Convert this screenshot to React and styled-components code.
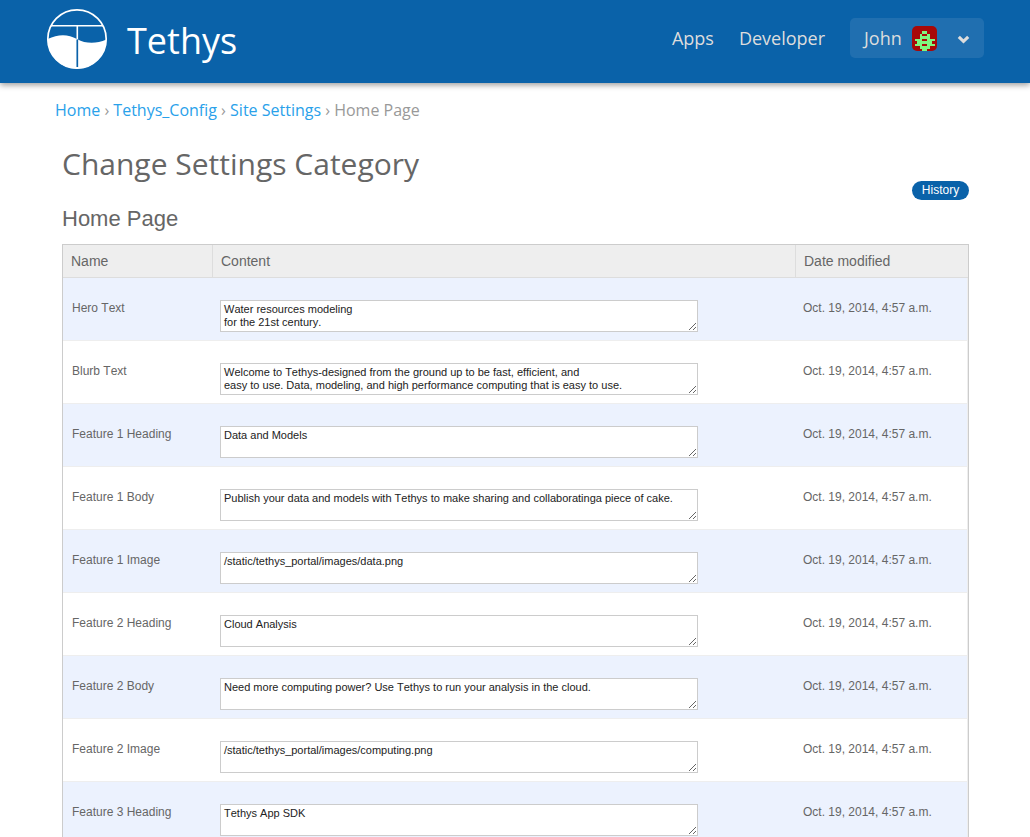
import React from "react";
import styled, { createGlobalStyle } from "styled-components";

const GlobalStyle = createGlobalStyle`
  * { box-sizing: border-box; }
  html, body { margin: 0; background: #fff; }
  body {
    height: 837px;
    overflow: hidden;
    color: #666;
    font-family: "Liberation Sans", Arial, sans-serif;
    font-size: 12px;
  }
`;

const display = `"Open Sans", "Noto Sans", sans-serif`;

const Header = styled.header`
  display: flex;
  align-items: flex-start;
  justify-content: space-between;
  height: 83px;
  padding: 0 46px;
  background: #0a62a9;
  box-shadow: 0 2px 6px rgba(0, 0, 0, 0.4);
`;

const Brand = styled.a`
  display: flex;
  align-items: flex-start;
  padding-top: 8px;
  color: #fff;
`;

const BrandName = styled.span`
  margin-left: 19px;
  padding-top: 6px;
  font: 36px/54px ${display};
`;

const Nav = styled.nav`
  display: flex;
  align-items: center;
  height: 40px;
  margin-top: 18px;
  color: #ddd;
  font: 18px/40px ${display};
`;

const NavLink = styled.a`
  margin-right: 25px;
`;

const UserMenu = styled.div`
  display: flex;
  align-items: center;
  width: 134px;
  height: 40px;
  padding-left: 14px;
  border-radius: 5px;
  background: #206fb0;
`;

const UserName = styled.span`
  width: 48px;
`;

const AvatarSvg = styled.svg`
  display: block;
  margin-top: 1px;
`;

const ChevronSvg = styled.svg`
  display: block;
  margin: 3px 0 0 20px;
`;

const Breadcrumbs = styled.div`
  height: 50px;
  padding: 15px 55px 0;
  color: #999;
  font: 16px/24px ${display};
  white-space: pre;
`;

const Crumb = styled.a`
  color: #29a1ea;
`;

const Separator = styled.span`
  font-size: 16px;
`;

const Main = styled.main`
  width: 907px;
  margin-left: 62px;
`;

const Title = styled.h1`
  height: 48px;
  margin: 7px 0 0;
  font: 30px/48px ${display};
`;

const Tools = styled.div`
  display: flex;
  justify-content: flex-end;
  height: 19px;
  margin-top: -7px;
`;

const HistoryButton = styled.a`
  width: 57px;
  height: 19px;
  border-radius: 10px;
  background: #0a62a9;
  color: #fff;
  font-size: 12px;
  line-height: 18px;
  text-align: center;
`;

const Subtitle = styled.h2`
  height: 26px;
  margin: 5px 0 13px;
  font-size: 22px;
  font-weight: 400;
  line-height: 27px;
`;

const Table = styled.div`
  border: 1px solid #ccc;
  font-kerning: none;
`;

const HeadRow = styled.div`
  display: grid;
  grid-template-columns: 150px 583px 1fr;
  height: 33px;
  border-bottom: 1px solid #ddd;
  background: #eee;
`;

const HeadCell = styled.div`
  padding-left: 8px;
  border-right: 1px solid #ddd;
  font-size: 14px;
  line-height: 32px;

  &:last-child { border-right: 0; }
`;

const Row = styled.div`
  display: grid;
  grid-template-columns: 157px 583px 1fr;
  height: 63px;
  border-right: 1px solid #eee;
  border-bottom: 1px solid #eee;
  background: ${(p) => (p.$shaded ? "#ecf2fe" : "#fff")};
`;

const Cell = styled.div`
  padding: 22px 0 0 ${(p) => p.$indent || 0}px;
  line-height: 16px;
`;

const Field = styled.textarea`
  display: block;
  width: 478px;
  height: 32px;
  margin: 0;
  padding: 2px 3px;
  border: 1px solid #ccc;
  border-radius: 0;
  background: #fff;
  color: #222;
  font: 11px/13px "Liberation Sans", Arial, sans-serif;
  font-kerning: none;
  overflow: hidden;
  resize: both;
`;

function Logo() {
  return (
    <svg width="62" height="62" viewBox="0 0 62 62">
      <path d="M1.6 31 C12 26 22 25.8 31 31 C40 36 50 36 60.4 31.6 A29.2 29.2 0 0 1 1.6 31Z" fill="#fff" />
      <circle cx="31" cy="31" r="29.2" fill="none" stroke="#fff" strokeWidth="1.7" />
      <path d="M5 17.7H57M31.3 17.7V31" stroke="#fff" strokeWidth="1.6" />
      <path d="M31.3 31.5V59" stroke="#0a62a9" strokeWidth="1.7" />
    </svg>
  );
}

const avatarPattern = [
  "..........",
  "..........",
  "....##....",
  "...#..#...",
  "...####...",
  ".###..###.",
  "..######..",
  ".###..###.",
  "...####...",
  "....##....",
];

function Avatar() {
  return (
    <AvatarSvg width="25" height="25" viewBox="0 0 10 10" shapeRendering="crispEdges">
      <rect width="10" height="10" rx="2" fill="#a80808" shapeRendering="auto" />
      {avatarPattern.flatMap((line, y) =>
        [...line].map((cell, x) =>
          cell === "#" ? <rect key={`${x}-${y}`} x={x} y={y} width="1" height="1" fill="#7ff77f" /> : null
        )
      )}
    </AvatarSvg>
  );
}

function Chevron() {
  return (
    <ChevronSvg width="13" height="10" viewBox="0 0 13 10">
      <path d="M1.8 1.9 6.5 6.4 11.2 1.9" fill="none" stroke="#ddd" strokeWidth="3.1" />
    </ChevronSvg>
  );
}

const settings = [
  ["Hero Text", "Water resources modeling\nfor the 21st century."],
  ["Blurb Text", "Welcome to Tethys-designed from the ground up to be fast, efficient, and\neasy to use. Data, modeling, and high performance computing that is easy to use."],
  ["Feature 1 Heading", "Data and Models"],
  ["Feature 1 Body", "Publish your data and models with Tethys to make sharing and collaboratinga piece of cake."],
  ["Feature 1 Image", "/static/tethys_portal/images/data.png"],
  ["Feature 2 Heading", "Cloud Analysis"],
  ["Feature 2 Body", "Need more computing power? Use Tethys to run your analysis in the cloud."],
  ["Feature 2 Image", "/static/tethys_portal/images/computing.png"],
  ["Feature 3 Heading", "Tethys App SDK"],
];

export default function App() {
  return (
    <>
      <GlobalStyle />
      <Header>
        <Brand>
          <Logo />
          <BrandName>Tethys</BrandName>
        </Brand>
        <Nav>
          <NavLink>Apps</NavLink>
          <NavLink>Developer</NavLink>
          <UserMenu>
            <UserName>John</UserName>
            <Avatar />
            <Chevron />
          </UserMenu>
        </Nav>
      </Header>
      <Breadcrumbs>
        <Crumb>Home</Crumb><Separator> › </Separator>
        <Crumb>Tethys_Config</Crumb><Separator> › </Separator>
        <Crumb>Site Settings</Crumb><Separator> › </Separator>Home Page
      </Breadcrumbs>
      <Main>
        <Title>Change Settings Category</Title>
        <Tools>
          <HistoryButton>History</HistoryButton>
        </Tools>
        <Subtitle>Home Page</Subtitle>
        <Table>
          <HeadRow>
            <HeadCell>Name</HeadCell>
            <HeadCell>Content</HeadCell>
            <HeadCell>Date modified</HeadCell>
          </HeadRow>
          {settings.map(([name, content], i) => (
            <Row key={name} $shaded={i % 2 === 0}>
              <Cell $indent={9}>{name}</Cell>
              <Cell>
                <Field defaultValue={content} spellCheck={false} />
              </Cell>
              <Cell>Oct. 19, 2014, 4:57 a.m.</Cell>
            </Row>
          ))}
        </Table>
      </Main>
    </>
  );
}
